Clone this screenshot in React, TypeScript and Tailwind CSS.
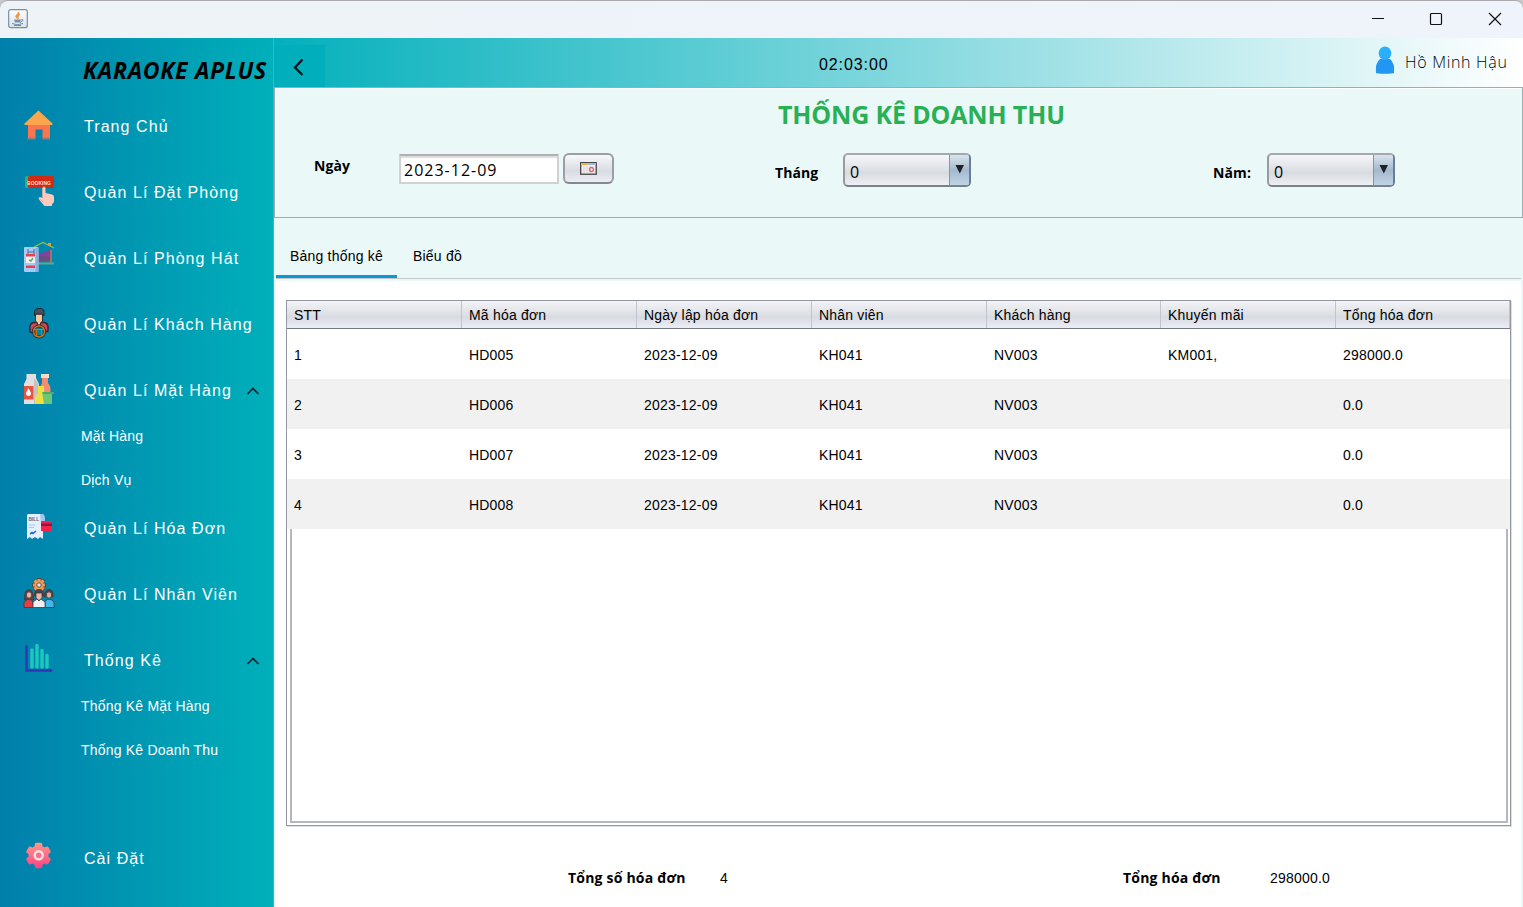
import React from "react";

const sans = "font-['Liberation_Sans',sans-serif]";
const humanist = "font-['Open_Sans','Noto_Sans',sans-serif]";

type IconProps = { children: React.ReactNode };

function Svg({ children }: IconProps) {
  return (
    <svg width="32" height="32" viewBox="0 0 32 32" className="shrink-0">
      {children}
    </svg>
  );
}

function HomeIcon() {
  return (
    <Svg>
      <path d="M5 14H27V30H19.500V20.500H12.500V30H5Z" fill="#fb7650" />
      <path d="M4.500 28.500H12.500V30.500H4.500ZM19.500 28.500H27V30.500H19.500Z" fill="#8b7f80" />
      <path d="M15.500 1.500L29.500 14.500V16H1.500V14.500Z" fill="#f9a64e" />
    </Svg>
  );
}

function BookingIcon() {
  return (
    <Svg>
      <rect x="2" y="1" width="12" height="12" rx="1.500" fill="#25b086" />
      <rect x="5" y="1" width="26" height="12" rx="1.500" fill="#d32a12" />
      <text x="4" y="9.500" fontSize="6" fontWeight="700" textLength="24" lengthAdjust="spacingAndGlyphs" fill="#f6dcd9" fontFamily="Liberation Sans">BOOKING</text>
      <path d="M19.500 13Q19.500 11.500 21 11.500Q22.500 11.500 22.500 13V18L29 19.500Q31 20 31 22V26Q31 28 29 29V31H21.500L16 24.500Q15 22.500 17 22L19.500 23Z" fill="#fdcabd" />
      <path d="M19.500 13V22.500M16 23L20 27" stroke="#dba5a2" strokeWidth=".8" fill="none" />
    </Svg>
  );
}

function RoomIcon() {
  return (
    <Svg>
      <path d="M11 6L20 1.500L31 7" stroke="#a6b83d" strokeWidth="1.200" fill="none" />
      <path d="M25 2H28V5H25Z" fill="#e8992f" />
      <path d="M15 12.500L20 11.500L27 9V18H15Z" fill="#84439b" />
      <path d="M15 15L27 16V20H15Z" fill="#67507e" />
      <path d="M28 9V22" stroke="#a66e6e" strokeWidth="2" />
      <path d="M15 22.500H31" stroke="#5fa889" strokeWidth="2" />
      <rect x="1" y="6" width="14.500" height="25" rx="1" fill="#a9caf0" />
      <path d="M12.500 7H15.500V31H12.500Z" fill="#86aee0" />
      <path d="M5 8V13M11 8V13M5 11H11" stroke="#3e6fa8" fill="none" />
      <path d="M3 13H12V22H3Z" fill="#f5eff5" />
      <path d="M3 13H12V15.500H3ZM3 24.500H12V27H3Z" fill="#e4434b" />
      <path d="M6 19L8 20L10 17" stroke="#4cac82" strokeWidth="1.400" fill="none" />
    </Svg>
  );
}

function CustomerIcon() {
  return (
    <Svg>
      <path d="M7 25V20Q7 16 11 15.500H21Q25 16 25 20V24L20 26H11Z" fill="#cf4658" stroke="#2c2a37" strokeWidth="1.400" />
      <path d="M12.500 7H19.500V14L17.500 16V18H14.500V16L12.500 14Z" fill="#f9c69d" stroke="#2b2d37" strokeWidth="1" />
      <path d="M11.500 9V4Q13 1 16 1.500Q21 1 21 5V9L19 7H13Z" fill="#44505e" stroke="#242630" />
      <circle cx="16" cy="24.500" r="5.500" fill="#08819b" stroke="#2c282c" strokeWidth="3" />
      <circle cx="16" cy="24.500" r="5.500" fill="none" stroke="#bd7a25" strokeWidth="1.500" />
      <path d="M11 22.500H21M13.500 22.500V29M18.500 22.500V29" stroke="#bd7a25" fill="none" />
    </Svg>
  );
}

function GoodsIcon() {
  return (
    <Svg>
      <path d="M3.500 1H13V5L16 11V31H1V11L3.500 6Z" fill="#e3dfe0" />
      <path d="M11 5L15.500 11V31H11Z" fill="#c5c2c5" />
      <path d="M1 13H10.500V26.500H1Z" fill="#e7533f" />
      <path d="M5.500 15L8 20Q8 23 5.500 23Q3 23 3 20Z" fill="#fff" />
      <path d="M18 1H26V5H18Z" fill="#f8dcc7" />
      <path d="M19 5H25V10Q28 13 27.500 16V23H17V15Q18 12 19 10Z" fill="#f18d72" />
      <path d="M15 13H21V18L22.500 22V31H12V24L15 20Z" fill="#eee041" />
      <path d="M19 19H31V21H29V31H21Z" fill="#6bc675" />
      <path d="M20 19H31V21H20Z" fill="#4dac62" />
    </Svg>
  );
}

function BillIcon() {
  return (
    <Svg>
      <path d="M5 3H20V28L17 26L15 28L12 26L9 28L7 26L4 28V4Z" fill="#e3efff" />
      <path d="M17 3H20Q22 4 22 8V13H18Z" fill="#9fc7f0" />
      <text x="5.500" y="10" fontSize="4.800" fontWeight="700" fill="#626378" fontFamily="Liberation Sans">BILL</text>
      <path d="M6 14H12M6 16.500H11" stroke="#a3c8f5" />
      <path d="M7 23L9 21.500L10 22.500L13 20" stroke="#246cd0" strokeWidth="1.600" fill="none" />
      <path d="M18 10H29V20H18Z" fill="#f8214b" />
      <path d="M18 12.500H29V15H18Z" fill="#8c183d" />
    </Svg>
  );
}

function StaffIcon() {
  return (
    <Svg>
      <path d="M16 1V15M9 8H23M11 3L21 13M21 3L11 13" stroke="#4c4446" strokeWidth="4" />
      <path d="M16 2V15M10 8H22M11.500 3.500L20.500 12.500M20.500 3.500L11.500 12.500" stroke="#ee9850" strokeWidth="3.200" />
      <circle cx="16" cy="8" r="2.200" fill="#d8eafb" stroke="#695a5b" />
      <g stroke="#40383e" strokeWidth=".8">
        <path d="M1.500 23Q1 12.500 6 12.500Q10.500 12.500 10.500 23Z" fill="#5d4341" />
        <ellipse cx="6" cy="18" rx="2.700" ry="3.200" fill="#e9b3a1" />
        <path d="M1 30.500V25Q4 21 9 23L11 30.500Z" fill="#e63f42" />
        <path d="M21.500 20Q21 12.500 26 12.500Q30.500 12.500 30 20Z" fill="#4d4346" />
        <ellipse cx="26" cy="18" rx="2.700" ry="3.200" fill="#dfad98" />
        <path d="M22 30.500V24Q27 20 31 25V30.500Z" fill="#40b8ed" />
        <path d="M11.500 19Q11 12.500 16 12.500Q21 12.500 20.500 19Z" fill="#4d4346" />
        <path d="M13 16H19V21L16 23.500L13 21Z" fill="#efb8a4" />
        <path d="M10 30.500V25L14 22L16 24L18 22L22 25V30.500Z" fill="#f0eff2" />
      </g>
    </Svg>
  );
}

function ChartIcon() {
  return (
    <Svg>
      <path d="M3.500 3V27.500H28" stroke="#3236b5" strokeWidth="2.400" fill="none" />
      <path d="M1.500 4.500H5.500L3.500 1.500ZM27 25.500V29.500L30 27.500Z" fill="#3236b5" />
      <path d="M9 7V24M14 2.500V24M19 7.500V24M24 12.500V24" stroke="#20d1c1" strokeWidth="3.400" strokeLinecap="round" opacity=".9" />
    </Svg>
  );
}

const teeth = [0, 60, 120, 180, 240, 300];

function GearIcon() {
  return (
    <Svg>
      <defs>
        <linearGradient id="gear" x1="0" y1="0" x2="0" y2="1">
          <stop stopColor="#ff9b86" />
          <stop offset="1" stopColor="#ff3d87" />
        </linearGradient>
        <clipPath id="gear-shape">
          <circle cx="15.500" cy="14.500" r="10" />
          {teeth.map((angle) => (
            <rect key={angle} x="11.700" y="1.800" width="7.600" height="8" rx="1.800" transform={`rotate(${angle} 15.500 14.500)`} />
          ))}
        </clipPath>
      </defs>
      <rect x="1" y="1" width="29" height="27" fill="url(#gear)" clipPath="url(#gear-shape)" />
      <circle cx="15.700" cy="14.300" r="4" fill="#fc6f83" stroke="#ffe4e7" strokeWidth="2.400" />
    </Svg>
  );
}

function Chevron() {
  return (
    <svg width="14" height="10" viewBox="0 0 14 10" className="ml-auto mr-[13px] mt-1">
      <path d="M1.500 8L7 2.500L12.500 8" fill="none" stroke="#06242b" strokeWidth="1.600" />
    </svg>
  );
}

type MenuItemProps = { icon: React.ReactNode; label: string; open?: boolean };

function MenuItem({ icon, label, open }: MenuItemProps) {
  return (
    <div className="flex h-[66px] shrink-0 items-center pl-[23px]">
      {icon}
      <span className="ml-[29px] whitespace-nowrap pt-[4px] text-[16px] leading-5 tracking-[1.07px]">{label}</span>
      {open && <Chevron />}
    </div>
  );
}

function SubMenu({ items }: { items: string[] }) {
  return (
    <div className="flex h-[72px] shrink-0 flex-col gap-6 pl-[81px] pt-[4px]">
      {items.map((item) => (
        <span key={item} className="h-5 whitespace-nowrap text-[14px] leading-5 tracking-[0.2px]">{item}</span>
      ))}
    </div>
  );
}

function Sidebar() {
  return (
    <aside className="flex w-[274px] shrink-0 flex-col border-r border-[#35b9c6] bg-linear-to-r/srgb from-[#007fab] to-[#00b0ba] text-white">
      <div className={`h-[54px] shrink-0 whitespace-nowrap pl-[83px] pt-[16px] text-[23px] font-bold italic leading-8 text-black tracking-[0.7px] ${humanist}`}>
        KARAOKE APLUS
      </div>
      <MenuItem icon={<HomeIcon />} label="Trang Chủ" />
      <MenuItem icon={<BookingIcon />} label="Quản Lí Đặt Phòng" />
      <MenuItem icon={<RoomIcon />} label="Quản Lí Phòng Hát" />
      <MenuItem icon={<CustomerIcon />} label="Quản Lí Khách Hàng" />
      <MenuItem icon={<GoodsIcon />} label="Quản Lí Mặt Hàng" open />
      <SubMenu items={["Mặt Hàng", "Dịch Vụ"]} />
      <MenuItem icon={<BillIcon />} label="Quản Lí Hóa Đơn" />
      <MenuItem icon={<StaffIcon />} label="Quản Lí Nhân Viên" />
      <MenuItem icon={<ChartIcon />} label="Thống Kê" open />
      <SubMenu items={["Thống Kê Mặt Hàng", "Thống Kê Doanh Thu"]} />
      <div className="h-[60px] shrink-0" />
      <MenuItem icon={<GearIcon />} label="Cài Đặt" />
    </aside>
  );
}

function TitleBar() {
  return (
    <div className="h-[38px] shrink-0 bg-[#c9c9cc]">
      <div className="flex h-full items-center rounded-t-lg border-t border-[#aaaaae] bg-linear-to-r/srgb from-[#eef3f8] to-[#eff3fb] pl-2">
        <svg width="20" height="20" viewBox="0 0 20 20" className="-mt-[2px]">
          <defs>
            <linearGradient id="jv" x1="0" y1="0" x2="0" y2="1">
              <stop stopColor="#fefefe" />
              <stop offset="1" stopColor="#dce1e6" />
            </linearGradient>
          </defs>
          <rect x=".7" y=".7" width="18.600" height="18" rx="2" fill="url(#jv)" stroke="#7590a6" strokeWidth="1.200" />
          <path d="M9.500 9.500Q6 7.500 9 5.500Q11 4.500 10 3Q13 5 10.500 7Q9.500 8 10.500 10" fill="#f29139" stroke="#ec8e3d" strokeWidth=".7" />
          <path d="M6 10.500H13L12 13.500H7Z" fill="#7590ae" />
          <path d="M13 11Q16 10 14.500 12L12 13.500M4 14.500Q9 17 15 14.500M6 16.500H13" fill="none" stroke="#6f8cad" />
        </svg>
        <svg width="132" height="16" viewBox="0 0 132 16" className="-mt-[2px] ml-auto mr-[20px]" fill="none" stroke="#111">
          <path d="M1 7.500H13" />
          <rect x="59.500" y="2.500" width="11" height="11" rx="1" strokeWidth="1.200" />
          <path d="M118 2L130 14M130 2L118 14" strokeWidth="1.200" />
        </svg>
      </div>
    </div>
  );
}

function Header() {
  return (
    <header className="flex h-[49px] shrink-0 bg-linear-to-r/srgb from-[#04b0bc] to-white text-black">
      <button className="mt-[7px] flex h-[42px] w-[51px] items-center bg-[#00afbb] pl-[18px] pt-[2px]">
        <svg width="14" height="20" viewBox="0 0 14 20">
          <path d="M10.500 2.500L3 10.500L10.500 18" fill="none" stroke="#05161b" strokeWidth="2.300" />
        </svg>
      </button>
      <span className="ml-[494px] mt-[17px] w-[75px] whitespace-nowrap text-[16px] leading-5 tracking-[0.9px]">02:03:00</span>
      <svg width="20" height="30" viewBox="0 0 20 30" className="ml-auto mt-[8px]">
        <path d="M1 27Q0 17 5 13H15Q20 17 19 27Q18 27.800 10 27.800Q2 27.800 1 27Z" fill="#2196f3" />
        <ellipse cx="10" cy="7.300" rx="6.300" ry="6.800" fill="#2ab0fb" />
      </svg>
      <span className={`ml-[10px] mt-3 w-[118px] whitespace-nowrap text-[16px] font-light leading-6 tracking-[0.7px] ${humanist}`}>Hồ Minh Hậu</span>
    </header>
  );
}

function ComboBox() {
  return (
    <div className={`flex h-[34px] w-[128px] overflow-hidden rounded-[5px] border-2 border-t-[#a5a8ae] border-l-[#989ba3] border-r-[#67809a] border-b-[#7c8088] bg-linear-to-b/srgb from-[#f7f7f9] via-[#d8dbe0] via-60% to-[#eceff4] text-black ${humanist}`}>
      <span className="flex-1 pl-[5px] pt-[5px] text-[16px] leading-6">0</span>
      <span className="flex w-[20px] justify-center border-l border-[#7c97b2] bg-linear-to-b/srgb from-[#d9e4ed] via-[#a5b9ce] to-[#bed3e6] pl-px pt-[10px]">
        <svg width="10" height="9" viewBox="0 0 10 9"><path d="M.5 0H9L4.800 8.500Z" fill="#1d2228" /></svg>
      </span>
    </div>
  );
}

function FilterPanel() {
  const label = `whitespace-nowrap text-[14px] font-bold leading-5 tracking-[0.1px] ${humanist}`;
  return (
    <section className="flex h-[131px] shrink-0 flex-col border border-[#9dadaf] bg-[#eaf8f8] shadow-[inset_0_1px_0_#fff,inset_1px_0_0_#fff]">
      <h1 className={`mt-[8px] h-9 whitespace-nowrap pl-[503px] text-[25px] font-bold leading-9 tracking-[-0.15px] text-[#29b055] ${humanist}`}>THỐNG KÊ DOANH THU</h1>
      <div className="mt-[21px] flex h-9 items-start">
        <span className={`ml-[39px] mt-[3px] w-[84px] ${label}`}>Ngày</span>
        <div className={`ml-px mt-px h-[30px] w-[160px] border-2 border-[#cfd1d3] border-t-[#aeb0b3] bg-white pl-[3px] pt-[2px] text-[16px] leading-6 tracking-[1px] text-black shadow-[inset_0_2px_1px_#ddd] ${humanist}`}>2023-12-09</div>
        <button className="ml-1 flex h-[31px] w-[51px] items-center justify-center rounded-[6px] border-2 border-[#9b9ea5] border-b-[#85888f] bg-linear-to-b/srgb from-[#f7f8fa] via-[#d8dbe1] via-60% to-[#ebeef4]">
          <svg width="17" height="13" viewBox="0 0 17 13">
            <rect x=".7" y=".7" width="15.500" height="11.500" fill="#f4eeee" stroke="#414145" strokeWidth="1.300" />
            <path d="M1 2H7" stroke="#edb145" strokeWidth="2" />
            <path d="M7 2H16" stroke="#a5bae0" strokeWidth="2" />
            <path d="M4 4V11M7 4V11M10 4V11" stroke="#d4d1d5" />
            <circle cx="11.500" cy="7.500" r="2" fill="none" stroke="#e3656b" strokeWidth="1.300" />
          </svg>
        </button>
        <span className={`ml-[161px] mt-[10px] w-[68px] ${label}`}>Tháng</span>
        <ComboBox />
        <span className={`ml-[242px] mt-[10px] w-[54px] ${label}`}>Năm:</span>
        <ComboBox />
      </div>
    </section>
  );
}

const columns = ["STT", "Mã hóa đơn", "Ngày lập hóa đơn", "Nhân viên", "Khách hàng", "Khuyến mãi", "Tổng hóa đơn"];
const rows = [
  ["1", "HD005", "2023-12-09", "KH041", "NV003", "KM001,", "298000.0"],
  ["2", "HD006", "2023-12-09", "KH041", "NV003", "", "0.0"],
  ["3", "HD007", "2023-12-09", "KH041", "NV003", "", "0.0"],
  ["4", "HD008", "2023-12-09", "KH041", "NV003", "", "0.0"],
];
const grid = "grid grid-cols-[175px_175px_175px_175px_174px_175px_174px]";

function InvoiceTable() {
  return (
    <div className="flex h-[526px] w-[1225px] shrink-0 flex-col border border-[#9297a1] text-[14px] tracking-[0.2px] text-black shadow-[1px_1px_0_#dddfe5]">
      <div className={`${grid} h-[28px] shrink-0 border-b border-[#747884] bg-linear-to-b/srgb from-[#f3f4f6] via-[#d8dbe1] via-60% to-[#ebeef4]`}>
        {columns.map((column) => (
          <div key={column} className="whitespace-nowrap border-r border-[#c0c4cd] pl-[7px] pt-[4px] leading-5">{column}</div>
        ))}
      </div>
      {rows.map((row) => (
        <div key={row[0]} className={`${grid} h-[50px] shrink-0 items-center even:bg-white odd:bg-[#f1f1f1]`}>
          {row.map((cell, index) => (
            <div key={index} className="whitespace-nowrap pl-[7px] pt-[2px] leading-5">{cell}</div>
          ))}
        </div>
      ))}
      <div className="mb-[2px] ml-[3px] mr-[2px] flex-1 border-x-2 border-b-2 border-[#b4b7c1]" />
    </div>
  );
}

function Totals() {
  const label = `whitespace-nowrap text-[14px] font-bold leading-5 tracking-[0.2px] ${humanist}`;
  return (
    <div className="mt-[42px] flex h-5 text-black">
      <span className={`ml-[292px] w-[152px] ${label}`}>Tổng số hóa đơn</span>
      <span className="w-[403px] text-[14px] leading-5">4</span>
      <span className={`w-[147px] ${label}`}>Tổng hóa đơn</span>
      <span className="text-[14px] leading-5 tracking-[0.2px]">298000.0</span>
    </div>
  );
}

export default function App() {
  return (
    <div className={`flex h-[907px] w-[1523px] flex-col overflow-hidden bg-white ${sans}`}>
      <TitleBar />
      <div className="flex min-h-0 flex-1">
        <Sidebar />
        <main className="flex w-[1249px] flex-col bg-[#eaf8f8]">
          <Header />
          <FilterPanel />
          <div className="mx-[2px] flex h-[61px] shrink-0 border-b border-[#c3c6c8] text-[14px] tracking-[0.2px] text-black">
            <div className="h-[60px] w-[121px] whitespace-nowrap border-b-[3px] border-[#0899d6] pl-[14px] pt-[28px] leading-5">Bảng thống kê</div>
            <div className="whitespace-nowrap pl-[16px] pt-[28px] leading-5">Biểu đồ</div>
          </div>
          <div className="mx-[2px] mt-[2px] flex flex-1 flex-col bg-white">
            <div className="ml-[10px] mt-[19px]">
              <InvoiceTable />
            </div>
            <Totals />
          </div>
        </main>
      </div>
    </div>
  );
}
